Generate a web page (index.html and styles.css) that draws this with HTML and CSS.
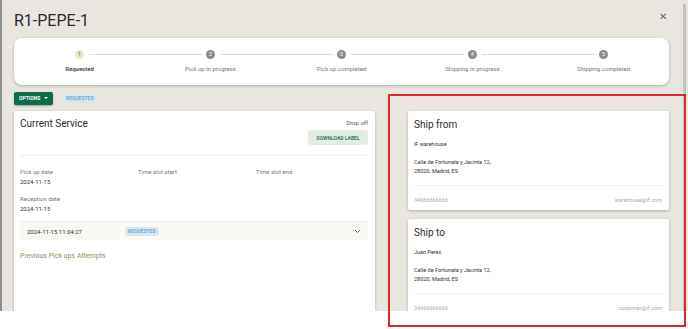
FILE: index.html
```html
<!DOCTYPE html>
<html lang="en">
<head>
    <meta charset="UTF-8">
    <meta name="viewport" content="width=device-width, initial-scale=1.0">
    <title>R1-PEPE-1</title>
    <link rel="stylesheet" href="styles.css">
</head>
<body>
    <div class="modal">
        <div class="header">
            <h1>R1-PEPE-1</h1>
            <span class="close">&#x2715;</span>
        </div>

        <div class="stepper">
            <div class="step active">
                <span class="dot">1</span>
                <span class="step-label">Requested</span>
            </div>
            <div class="step">
                <span class="dot">2</span>
                <span class="step-label">Pick up in progress</span>
            </div>
            <div class="step">
                <span class="dot">3</span>
                <span class="step-label">Pick up completed</span>
            </div>
            <div class="step">
                <span class="dot">4</span>
                <span class="step-label">Shipping in progress</span>
            </div>
            <div class="step last">
                <span class="dot">5</span>
                <span class="step-label">Shipping completed</span>
            </div>
        </div>

        <div class="actions">
            <button class="btn-options">OPTIONS <span class="caret"></span></button>
            <span class="chip">REQUESTED</span>
        </div>

        <div class="content">
            <div class="card service">
                <div class="service-head">
                    <h2>Current Service</h2>
                    <div class="service-side">
                        <span class="drop">Drop off</span>
                        <button class="btn-label">DOWNLOAD LABEL</button>
                    </div>
                </div>
                <hr class="divider">
                <div class="fields">
                    <div class="field">
                        <span class="field-name">Pick up date</span>
                        <span class="field-value">2024-11-15</span>
                    </div>
                    <div class="field">
                        <span class="field-name">Time slot start</span>
                    </div>
                    <div class="field">
                        <span class="field-name">Time slot end</span>
                    </div>
                    <div class="field">
                        <span class="field-name">Reception date</span>
                        <span class="field-value">2024-11-15</span>
                    </div>
                </div>
                <div class="attempt">
                    <span class="attempt-date">2024-11-15 11:04:27</span>
                    <span class="chip">REQUESTED</span>
                    <svg class="chevron" width="7" height="5" viewBox="0 0 7 5"><path d="M1 1 L3.5 3.5 L6 1" fill="none" stroke="#666" stroke-width="1"/></svg>
                </div>
                <a class="previous" href="#">Previous Pick ups Attempts</a>
            </div>

            <div class="side">
                <div class="card address">
                    <h2>Ship from</h2>
                    <p>iF warehouse</p>
                    <p>Calle de Fortunata y Jacinta 12,<br>28020, Madrid, ES</p>
                    <hr class="divider">
                    <div class="contact">
                        <span>34666666666</span>
                        <span>warehouse@if.com</span>
                    </div>
                </div>
                <div class="card address">
                    <h2>Ship to</h2>
                    <p>Juan Perez</p>
                    <p>Calle de Fortunata y Jacinta 12,<br>28020, Madrid, ES</p>
                    <hr class="divider">
                    <div class="contact">
                        <span>34666666666</span>
                        <span>customer@if.com</span>
                    </div>
                </div>
            </div>
        </div>

        <div class="scrollbar"></div>
    </div>

    <div class="highlight"></div>
</body>
</html>
```

FILE: styles.css
```css
body {
    margin: 0;
    background-color: #fff;
    font-family: Roboto, "Liberation Sans", sans-serif;
    color: #333;
}

.modal {
    position: relative;
    height: 311px;
    overflow: hidden;
    background-color: #e9e6e0;
    border-left: 2px solid #8f8f8f;
    padding: 0 19px 0 12px;
}

.header {
    display: flex;
    justify-content: space-between;
    align-items: flex-start;
    height: 38px;
}

h1 {
    margin: 0;
    padding-top: 11px;
    font-size: 16px;
    font-weight: 400;
    line-height: 20px;
    color: #2b2b2b;
}

.close {
    margin-top: 11px;
    margin-right: 2px;
    font-size: 10px;
    color: #666;
}

/* linha de etapas */
.stepper {
    display: grid;
    grid-template-columns: repeat(5, 1fr);
    height: 47px;
    background-color: #fff;
    border-radius: 8px;
    box-shadow: 0 1px 3px rgba(0,0,0,0.25);
}

.step {
    position: relative;
    display: flex;
    flex-direction: column;
    align-items: center;
    padding-top: 12px;
}

.step::after {
    content: "";
    position: absolute;
    top: 16px;
    left: calc(50% + 9px);
    width: calc(100% - 18px);
    height: 1px;
    background-color: #dcdcdc;
}

.step.last::after {
    display: none;
}

.dot {
    width: 9px;
    height: 9px;
    border-radius: 50%;
    background-color: #8c8c8c;
    color: #fff;
    font-size: 5px;
    line-height: 9px;
    text-align: center;
}

.step.active .dot {
    background-color: #dcedc8;
    color: #557a35;
}

.step-label {
    margin-top: 6px;
    font-size: 6px;
    color: #777;
}

.step.active .step-label {
    color: #333;
    font-weight: 500;
}

.actions {
    display: flex;
    align-items: center;
    gap: 10px;
    height: 26px;
}

.btn-options {
    display: flex;
    align-items: center;
    gap: 4px;
    height: 13px;
    width: 39px;
    padding: 0 0 0 5px;
    border: none;
    border-radius: 2px;
    background-color: #0d6a4b;
    color: #fff;
    font-family: inherit;
    font-size: 5px;
    font-weight: 700;
    box-shadow: 0 1px 2px rgba(0,0,0,0.3);
}

.caret {
    width: 0;
    height: 0;
    border-left: 2px solid transparent;
    border-right: 2px solid transparent;
    border-top: 2px solid #fff;
}

.chip {
    display: inline-block;
    padding: 0 3px;
    height: 9px;
    line-height: 9px;
    border-radius: 2px;
    background-color: #d8e8ee;
    color: #5aa3d0;
    font-size: 5px;
    font-weight: 500;
}

.content {
    display: grid;
    grid-template-columns: 361px 261px;
    gap: 33px;
}

.card {
    background-color: #fff;
    border-radius: 2px;
    box-shadow: 0 1px 3px rgba(0,0,0,0.25);
}

.service {
    height: 230px;
    padding: 6px 7px 0 6px;
}

.service-head {
    display: flex;
    justify-content: space-between;
}

h2 {
    margin: 0;
    font-size: 10px;
    font-weight: 400;
    line-height: 13px;
    color: #2b2b2b;
}

.service-side {
    display: flex;
    flex-direction: column;
    align-items: flex-end;
}

.drop {
    margin-top: 2px;
    font-size: 6px;
    color: #555;
}

.btn-label {
    margin-top: 4px;
    width: 60px;
    height: 15px;
    padding: 0;
    border: none;
    border-radius: 3px;
    background-color: #e2eee5;
    color: #3e7a5b;
    font-family: inherit;
    font-size: 5px;
    font-weight: 700;
}

.divider {
    margin: 10px 0 0;
    border: none;
    border-top: 1px solid #eee;
}

.fields {
    display: grid;
    grid-template-columns: 118px 118px 1fr;
    row-gap: 10px;
    margin-top: 12px;
}

.field {
    display: flex;
    flex-direction: column;
    gap: 3px;
}

.field-name {
    font-size: 6px;
    color: #777;
}

.field-value {
    font-size: 6px;
    color: #333;
}

.attempt {
    display: flex;
    align-items: center;
    height: 18px;
    margin-top: 9px;
    padding: 0 7px 0 7px;
    background-color: #fbf9f3;
    border-top: 1px solid #f0ede5;
}

.attempt-date {
    width: 98px;
    font-size: 6px;
    color: #333;
}

.chevron {
    margin-left: auto;
}

.previous {
    display: block;
    margin-top: 12px;
    font-size: 7px;
    color: #a08757;
    text-decoration: none;
}

.side {
    display: flex;
    flex-direction: column;
    gap: 9px;
}

.address {
    padding: 7px 7px 7px 6px;
}

.address p {
    margin: 9px 0 0;
    font-size: 5.5px;
    line-height: 9px;
    color: #333;
}

.address p + p {
    margin-top: 9px;
}

.address .divider {
    margin-top: 9px;
}

.contact {
    display: flex;
    justify-content: space-between;
    margin-top: 11px;
    font-size: 5.5px;
    color: #aaa;
}

.scrollbar {
    position: absolute;
    top: 4px;
    right: 2px;
    width: 3px;
    height: 307px;
    background-color: #c2c2c2;
}

/* moldura vermelha de destaque */
.highlight {
    position: absolute;
    left: 388px;
    top: 94px;
    width: 294px;
    height: 229px;
    border: 2px solid #e3262a;
}
```
